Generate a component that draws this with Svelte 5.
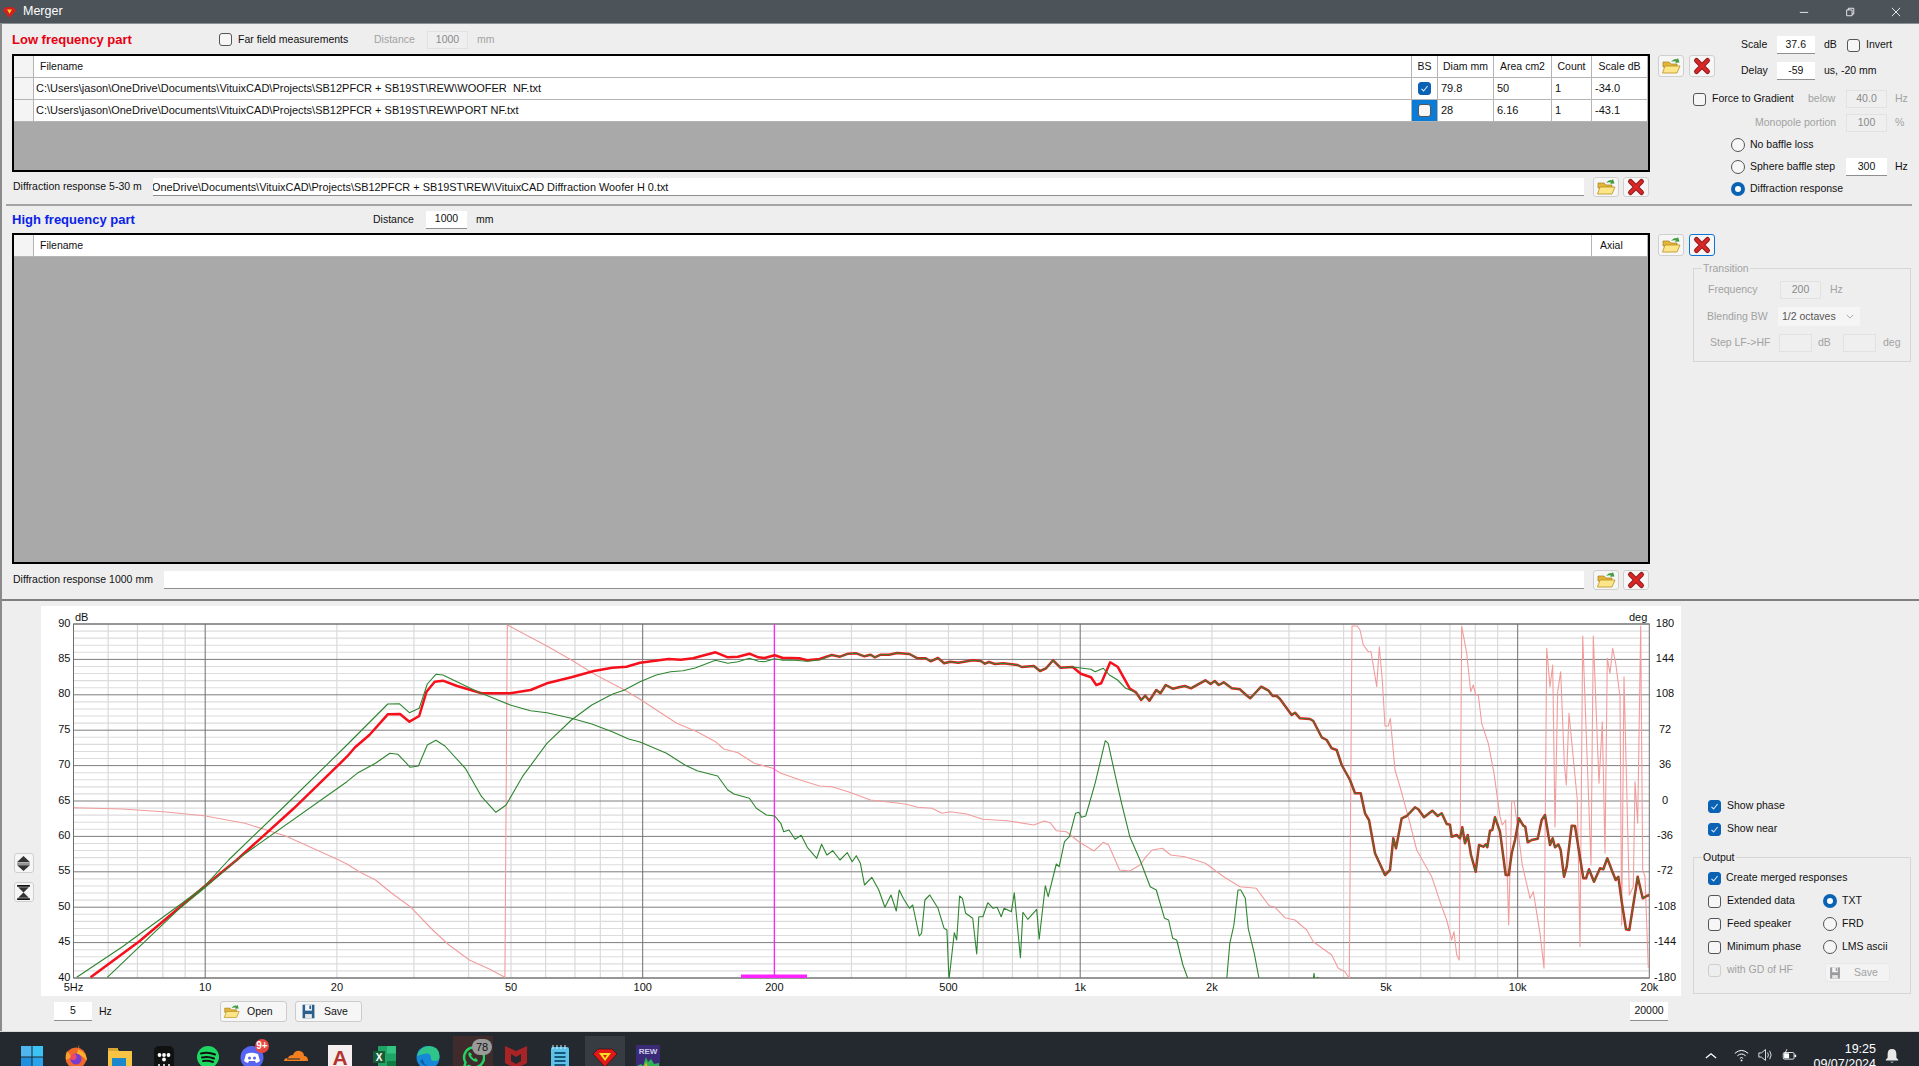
<script>
  const X = (f) => 73.5 + 437.5 * Math.log10(f / 5);
  const Y = (db) => 624 + (90 - db) * 7.08;
  const z4 = (a) => a.map(([x, y]) => [x / 2.45, 560 + y / 3]);
  const z5 = (a) => a.map(([x, y]) => [640 + x / 2.45, 600 + y / 3]);
  const z6 = (a) => a.map(([x, y]) => [1270 + x / 3, 600 + y / 3]);
  const z10 = (a) => a.map(([x, y]) => [x / 2.45, 860 + y / 3]);
  const pts = (a) => a.map(([x, y]) => x.toFixed(1) + ',' + y.toFixed(1)).join(' ');

  const redLow = [...z10([[222,352],[340,245],[500,80]]),
    ...z4([[580,900],[720,745],[825,620],[850,590],[870,562],[905,525],[950,463],[980,462],[1003,485],[1027,468],[1045,395],[1065,365],[1085,362],[1120,378],[1180,400],[1250,400],[1300,390],[1340,370],[1400,352],[1455,333],[1500,323],[1535,320],[1568,308]]),
    ...z5([[70,177],[100,179],[130,175],[185,157],[215,172],[240,170],[268,161],[290,172],[305,174],[330,166],[350,174],[370,174],[390,175],[410,181],[440,177]])];
  const shared1 = z5([[470,165],[490,170],[510,161],[530,160],[550,169],[565,164],[575,172],[590,164],[610,164],[630,159],[660,162],[680,175],[700,175],[712,184],[730,174],[745,190],[760,185],[780,188],[815,181],[835,183],[845,191],[855,186],[870,192],[890,190],[925,195],[935,201],[965,198],[980,213],[995,205],[1012,181],[1030,203],[1060,201]]);
  const redBump = z5([[1080,221],[1105,232],[1118,255],[1130,250],[1152,187],[1170,200],[1200,266]]);
  const greenBump = z5([[1085,205],[1105,208],[1115,215],[1135,205],[1150,225],[1170,240],[1190,265]]);
  const shared2 = [...z5([[1215,277],[1228,300],[1238,287],[1248,302],[1265,270],[1275,280],[1288,255],[1305,266],[1320,262],[1335,258],[1350,265],[1385,241],[1398,252],[1408,243],[1418,255],[1430,247],[1450,265],[1470,268],[1485,285],[1495,295],[1505,282],[1522,260],[1540,272],[1550,288],[1560,288]]),
    ...z6([[30,297],[65,345],[75,338],[90,355],[120,357],[130,363],[155,412],[170,420],[185,445],[200,450],[215,495],[240,540],[255,580],[272,580],[285,640],[297,660],[315,760],[345,825],[360,810],[370,715],[378,745],[395,655],[410,648],[435,622],[445,628],[462,652],[487,632],[503,648],[515,640],[530,672],[540,674],[545,710],[560,705],[570,715],[577,682],[585,730],[593,705],[603,765],[617,815],[627,735],[640,740],[648,733],[652,742],[660,692],[667,690],[675,652],[690,695],[707,825],[716,825],[725,760],[735,720],[747,655],[760,677],[766,680],[773,727],[785,720],[803,716],[815,660],[825,645],[840,735],[848,715],[855,742],[865,733],[872,750],[882,830],[890,800],[905,677],[915,678],[940,835],[948,835],[957,808],[972,845],[990,805],[1000,808],[1012,775],[1025,810],[1037,840],[1045,830],[1055,905],[1068,988],[1078,990],[1103,830],[1118,895],[1130,888],[1138,885]])];
  const red = [...redLow, ...shared1, ...redBump, ...shared2];

  const greenA = [...z10([[188,352],[300,260],[440,135],[500,80]]),
    ...z4([[560,900],[700,735],[850,555],[950,432],[978,431],[1003,458],[1027,445],[1047,372],[1068,343],[1085,345],[1170,395],[1250,435],[1300,452],[1340,458],[1400,475],[1450,492],[1500,515],[1540,537]]),
    ...z5([[0,426],[65,460],[110,495],[140,512],[190,528],[215,570],[230,582],[268,595],[285,625],[310,645],[330,648],[345,670],[352,695],[365,690],[380,718],[395,706],[410,742],[433,775],[445,733],[458,765],[472,752],[490,780],[508,758],[520,785],[530,767],[540,790],[550,855],[568,832],[585,870],[600,922],[615,885],[628,933],[635,870],[645,895],[660,925],[668,915],[684,1008],[690,1000],[698,900],[710,885],[730,925],[745,985],[752,990],[757,1140],[770,998],[776,1020],[783,888],[790,895],[798,940],[815,955],[825,1062],[830,950],[840,950],[852,908],[865,925],[875,922],[885,950],[892,925],[910,935],[917,878],[932,1073],[938,937],[950,958],[972,928],[978,1018],[993,857],[1000,890],[1020,792],[1027,800],[1040,725],[1052,710],[1067,640],[1075,637],[1082,652],[1092,648],[1115,550],[1140,422],[1147,430],[1165,530],[1180,610],[1200,710],[1225,780],[1250,860],[1265,870],[1285,955],[1295,960],[1305,1015],[1315,1020],[1330,1095],[1345,1145],[1437,1145],[1445,1030],[1455,975],[1465,870],[1472,870],[1483,895],[1490,985],[1505,1060],[1518,1145]])];
  const blip = z6([[130,1140],[132,1120],[135,1140],[143,1132],[148,1140]]);

  const greenB = [...z10([[263,352],[440,145],[500,85]]),
    ...z4([[590,890],[850,665],[875,640],[920,610],[955,580],[975,583],[1005,622],[1025,618],[1047,555],[1068,541],[1090,558],[1140,625],[1180,710],[1215,757],[1240,735],[1280,650],[1340,550],[1400,480],[1450,435],[1500,403],[1530,390]]),
    ...z5([[0,245],[40,225],[75,215],[105,212],[135,204],[185,181],[215,190],[240,185],[268,175],[290,184],[305,185],[330,176],[350,181],[370,180],[410,184],[440,180]]),
    ...shared1, ...greenBump, ...shared2];

  const pink = [...z4([[180,743],[300,747],[400,755],[500,767],[600,790],[700,828]]),
    ...z10([[830,0],[850,12],[880,35],[920,60],[960,100],[1005,140],[1060,210],[1100,255],[1150,300],[1200,328],[1237,352]]),
    ...z4([[1243,195],[1340,258],[1400,300],[1460,345],[1530,390]]),
    ...z5([[0,298],[90,370],[140,395],[185,425],[205,447],[240,458],[280,490],[325,505],[345,520],[400,543],[440,558],[470,560],[510,575],[565,600],[650,612],[680,622],[715,625],[740,640],[760,635],[800,642],[840,658],[900,662],[965,675],[990,663],[1005,668],[1020,692],[1045,695],[1075,725],[1112,753],[1135,727],[1148,735],[1175,810],[1200,813],[1225,795],[1240,770],[1255,750],[1280,745],[1300,765],[1335,770],[1385,790],[1430,830],[1470,860],[1510,865],[1540,915]]),
    ...z6([[0,918],[15,922],[45,953],[75,960],[110,990],[130,1025],[185,1065],[205,1105],[225,1115],[238,1135],[246,78],[262,78],[270,90],[280,135],[295,155],[303,155],[320,260],[328,140],[337,240],[345,378],[355,378],[361,355],[375,510],[390,560],[420,670],[440,750],[485,830],[515,920],[530,960],[545,1020],[552,995],[560,1065],[568,1080],[575,78],[590,160],[602,275],[610,255],[617,285],[625,285],[635,370],[655,430],[672,520],[690,650],[697,675],[707,660],[716,975],[725,605],[733,605],[757,795],[780,895],[790,875],[810,1000],[822,1105],[830,145],[840,260],[848,195],[855,680],[863,275],[872,215],[883,490],[889,555],[897,340],[922,600],[930,1040],[938,108],[963,795],[970,108],[987,550],[997,365],[1005,760],[1012,175],[1020,220],[1028,145],[1037,190],[1050,290],[1055,975],[1062,230],[1078,885],[1090,860],[1095,545],[1103,670],[1112,78],[1118,810],[1125,830],[1135,1105]])];

  const minorF = [];
  for (const d of [1, 10, 100, 1000, 10000]) {
    for (let m = 1; m <= 9; m++) {
      const f = d * m;
      if (f > 5 && f < 20000 && ![10, 100, 1000, 10000].includes(f)) minorF.push(f);
    }
  }
  const majorF = [10, 100, 1000, 10000];
  const minorDb = [];
  const majorDb = [];
  for (let db = 40; db <= 90; db++) (db % 5 === 0 ? majorDb : minorDb).push(db);
  const xticks = [[5,'5Hz'],[10,'10'],[20,'20'],[50,'50'],[100,'100'],[200,'200'],[500,'500'],[1000,'1k'],[2000,'2k'],[5000,'5k'],[10000,'10k'],[20000,'20k']];
  const degs = [180,144,108,72,36,0,-36,-72,-108,-144,-180];

  const rows = [
    { file: 'C:\\Users\\jason\\OneDrive\\Documents\\VituixCAD\\Projects\\SB12PFCR + SB19ST\\REW\\WOOFER  NF.txt', bs: true, d: '79.8', a: '50', c: '1', s: '-34.0' },
    { file: 'C:\\Users\\jason\\OneDrive\\Documents\\VituixCAD\\Projects\\SB12PFCR + SB19ST\\REW\\PORT NF.txt', bs: false, d: '28', a: '6.16', c: '1', s: '-43.1' }
  ];
</script>

{#snippet folder()}
  <svg class="ico" viewBox="0 0 20 20" aria-hidden="true">
    <path d="M2 6h6l2 2h6v3H2z" fill="#e2b53a" stroke="#a67f1c" stroke-width=".7"/>
    <path d="M1.5 17 4 10h15l-3 7z" fill="#fde58a" stroke="#b8901f" stroke-width=".8"/>
    <path d="M10 6q2.500-3.500 6-2.800l1-1.200 1.500 4.500-4.500.2 1-1.200q-2.500-.8-5 .5z" fill="#3f9d3f"/>
  </svg>
{/snippet}
{#snippet cross()}
  <svg class="ico" viewBox="0 0 20 20" aria-hidden="true">
    <path d="M4.500 4.500l11 11M15.500 4.500l-11 11" stroke="#8f1d1d" stroke-width="5" stroke-linecap="round"/>
    <path d="M4.500 4.500l11 11M15.500 4.500l-11 11" stroke="#dc2626" stroke-width="3" stroke-linecap="round"/>
  </svg>
{/snippet}
{#snippet floppy(c)}
  <svg class="ico" viewBox="0 0 20 20" aria-hidden="true">
    <path d="M3 2h14v16H3z" fill={c}/>
    <path d="M6 2h8v7H6z" fill="#f2f6fa"/>
    <path d="M6 13h8v5H6z" fill="#e6e6e6"/>
    <path d="M11 3h2v4h-2z" fill={c}/>
  </svg>
{/snippet}
{#snippet checkbox(on, off)}
  <span class="cb" class:on class:off>
    {#if on}
      <svg viewBox="0 0 13 13" aria-hidden="true"><path d="M3.500 6.800 5.600 9l4-5" fill="none" stroke="#dbe9f6" stroke-width="1.100"/></svg>
    {/if}
  </span>
{/snippet}

<div class="app">
  <header class="titlebar">
    <svg class="logo" viewBox="0 0 16 14" aria-hidden="true">
      <path d="M3 1h10l3 4-8 9-8-9z" fill="#d81e1e"/>
      <path d="M5 4h6l-3 5z" fill="#f5d020"/>
    </svg>
    <span class="wtitle">Merger</span>
    <div class="wctl">
      <span class="wbtn"><svg viewBox="0 0 12 12" aria-hidden="true"><path d="M1 6.500h10" stroke="#fff"/></svg></span>
      <span class="wbtn"><svg viewBox="0 0 12 12" aria-hidden="true"><path d="M2 3.500h6.500v7H2zM4 3.500V1.500h6.500v7H8.500" fill="none" stroke="#fff"/></svg></span>
      <span class="wbtn"><svg viewBox="0 0 12 12" aria-hidden="true"><path d="M1 1l10 10M11 1 1 11" stroke="#fff"/></svg></span>
    </div>
  </header>

  <main class="window">
    <section class="band lfband">
      <div class="leftcol">
        <div class="head lfhead">
          <h2 class="lf">Low frequency part</h2>
          <label class="ck farfield">{@render checkbox(false)}<span>Far field measurements</span></label>
          <span class="dim dist">Distance</span>
          <span class="inp dis w41">1000</span>
          <span class="dim unit">mm</span>
        </div>
        <div class="tbl lftbl">
          <table>
            <thead>
              <tr><th class="rh"></th><th class="fn">Filename</th><th class="c-bs">BS</th><th class="c-d">Diam mm</th><th class="c-a">Area cm2</th><th class="c-c">Count</th><th class="c-s">Scale dB</th></tr>
            </thead>
            <tbody>
              {#each rows as r}
                <tr>
                  <td class="rh"></td><td class="file">{r.file}</td>
                  <td class="bscell" class:sel={!r.bs}>{@render checkbox(r.bs)}</td>
                  <td>{r.d}</td><td>{r.a}</td><td>{r.c}</td><td>{r.s}</td>
                </tr>
              {/each}
            </tbody>
          </table>
        </div>
        <div class="diff lfdiff">
          <span class="dlabel lfl">Diffraction response 5-30 m</span>
          <span class="inp wide clipped"><span class="shift">OneDrive\Documents\VituixCAD\Projects\SB12PFCR + SB19ST\REW\VituixCAD Diffraction Woofer H 0.txt</span></span>
          <button class="ib small">{@render folder()}</button>
          <button class="ib small">{@render cross()}</button>
        </div>
      </div>
      <aside class="rightcol">
        <div class="scaleblock">
          <div class="btnpair">
            <button class="ib">{@render folder()}</button>
            <button class="ib">{@render cross()}</button>
          </div>
          <div class="scaleform">
            <div class="frow"><span class="w36">Scale</span><span class="inp w39">37.6</span><span class="du">dB</span>{@render checkbox(false)}<span class="invert">Invert</span></div>
            <div class="frow"><span class="w36">Delay</span><span class="inp w39">-59</span><span class="du">us, -20 mm</span></div>
          </div>
        </div>
        <div class="frow force">
          {@render checkbox(false)}<span class="ftxt">Force to Gradient</span><span class="dim blw">below</span><span class="inp dis w41">40.0</span><span class="dim hz">Hz</span>
        </div>
        <div class="frow mono">
          <span class="dim monol">Monopole portion</span><span class="inp dis w41">100</span><span class="dim hz">%</span>
        </div>
        <div class="frow radio r1"><span class="rd"></span><span>No baffle loss</span></div>
        <div class="frow radio r2"><span class="rd"></span><span class="sph">Sphere baffle step</span><span class="inp w41">300</span><span class="hz2">Hz</span></div>
        <div class="frow radio r2"><span class="rd on"></span><span>Diffraction response</span></div>
      </aside>
    </section>

    <div class="sep"></div>

    <section class="band hfband">
      <div class="leftcol">
        <div class="head hfhead">
          <h2 class="hf">High frequency part</h2>
          <span class="dist2">Distance</span>
          <span class="inp w41">1000</span>
          <span class="unit">mm</span>
        </div>
        <div class="tbl hftbl">
          <table>
            <thead><tr><th class="rh"></th><th class="fn">Filename</th><th class="c-ax">Axial</th></tr></thead>
          </table>
        </div>
        <div class="diff hfdiff">
          <span class="dlabel hfl">Diffraction response 1000 mm</span>
          <span class="inp wide"></span>
          <button class="ib small">{@render folder()}</button>
          <button class="ib small">{@render cross()}</button>
        </div>
      </div>
      <aside class="rightcol">
        <div class="btnpair hfbtns">
          <button class="ib">{@render folder()}</button>
          <button class="ib focus">{@render cross()}</button>
        </div>
        <fieldset class="group trans">
          <legend>Transition</legend>
          <div class="frow t1"><span class="dim tl1">Frequency</span><span class="inp dis w41">200</span><span class="dim thz">Hz</span></div>
          <div class="frow t2"><span class="dim tl2">Blending BW</span><span class="sel-box">1/2 octaves<svg viewBox="0 0 10 6" aria-hidden="true"><path d="M1 1l4 4 4-4" fill="none" stroke="#999"/></svg></span></div>
          <div class="frow t3"><span class="dim tl3">Step LF-&gt;HF</span><span class="inp dis w33"></span><span class="dim tdb">dB</span><span class="inp dis w33"></span><span class="dim tdeg">deg</span></div>
        </fieldset>
      </aside>
    </section>

    <section class="lower">
      <div class="strip">
        <button class="ib tool">
          <svg viewBox="0 0 16 16" aria-hidden="true"><path d="M8 1l6 5.500H2z" fill="#333"/><path d="M2 7h12v.9H2zM2 8.300h12v.9H2z" fill="#777"/><path d="M2 9.700h12L8 15z" fill="#333"/></svg>
        </button>
        <button class="ib tool">
          <svg viewBox="0 0 16 16" aria-hidden="true"><path d="M2 1h12v1.500H2zM2 13.500h12V15H2z" fill="#111"/><path d="M3 3h10L8 8zM8 8l5 5H3z" fill="#333"/></svg>
        </button>
      </div>

      <svg class="chart" viewBox="41 606 1640 390" aria-label="Frequency response chart">
        <defs><clipPath id="plot"><rect x="73.500" y="624" width="1575.800" height="354"/></clipPath></defs>
        <rect x="41" y="606" width="1640" height="390" fill="#fff"/>
        {#each minorDb as d}<line x1="73.500" x2="1649.300" y1={Y(d)} y2={Y(d)} stroke="#dcdcdc" stroke-width="1.100"/>{/each}
        {#each minorF as f}<line x1={X(f)} x2={X(f)} y1="624" y2="978" stroke="#dadada" stroke-width="1.200"/>{/each}
        {#each majorDb as d}<line x1="73.500" x2="1649.300" y1={Y(d)} y2={Y(d)} stroke="#7e7e7e" stroke-width="1"/>{/each}
        {#each majorF as f}<line x1={X(f)} x2={X(f)} y1="624" y2="978" stroke="#6e6e6e" stroke-width="1"/>{/each}
        <rect x="73.500" y="624" width="1575.800" height="354" fill="none" stroke="#6e6e6e"/>

        <g clip-path="url(#plot)" fill="none" stroke-linejoin="round">
          <polyline points={pts(pink)} stroke="#f29c9c" stroke-width="1.100"/>
          <line x1={X(200)} x2={X(200)} y1="624" y2="978" stroke="#ff22ff" stroke-width="1.300"/>
          <polyline points={pts(red)} stroke="#f5101c" stroke-width="2.500"/>
          <polyline points={pts(greenA)} stroke="#2e8530" stroke-width="1.100"/>
          <polyline points={pts(greenB)} stroke="#2e8530" stroke-width="1.100"/>
          <polyline points={pts(blip)} stroke="#2e8530" stroke-width="1.100"/>
          <rect x="741" y="974.500" width="66" height="4" fill="#ff22ff" stroke="none"/>
        </g>

        <g class="ct">
          {#each majorDb as d}<text x="70.500" y={Y(d) + 2.500} text-anchor="end">{d}</text>{/each}
          {#each xticks as [f, t]}<text x={X(f)} y="991" text-anchor="middle">{t}</text>{/each}
          {#each degs as d, i}<text x="1665" y={624 + i * 35.400 + 2.500} text-anchor="middle">{d}</text>{/each}
          <text x="75" y="621">dB</text>
          <text x="1629" y="621">deg</text>
        </g>
      </svg>

      <aside class="lowright">
        <label class="ck lr1">{@render checkbox(true)}<span>Show phase</span></label>
        <label class="ck lr2">{@render checkbox(true)}<span>Show near</span></label>
        <fieldset class="group out">
          <legend class="blk">Output</legend>
          <label class="ck o1">{@render checkbox(true)}<span class="tight">Create merged responses</span></label>
          <div class="ogrid">
            <label class="ck">{@render checkbox(false)}<span>Extended data</span></label>
            <label class="ck"><span class="rd on bl"></span><span class="rdl">TXT</span></label>
            <label class="ck">{@render checkbox(false)}<span>Feed speaker</span></label>
            <label class="ck"><span class="rd bl"></span><span class="rdl">FRD</span></label>
            <label class="ck">{@render checkbox(false)}<span>Minimum phase</span></label>
            <label class="ck"><span class="rd bl"></span><span class="rdl">LMS ascii</span></label>
            <label class="ck disabled">{@render checkbox(false, true)}<span class="dim">with GD of HF</span></label>
            <button class="txtbtn savedis">{@render floppy('#9a9a9a')}<span class="dim">Save</span></button>
          </div>
        </fieldset>
      </aside>

      <div class="botbar">
        <span class="inp w38 tall">5</span>
        <span class="bhz">Hz</span>
        <button class="txtbtn open">{@render folder()}<span>Open</span></button>
        <button class="txtbtn save">{@render floppy('#2b5f8e')}<span>Save</span></button>
        <span class="inp w38 tall end">20000</span>
      </div>
    </section>
  </main>

  <footer class="taskbar">
    <div class="tile"><svg viewBox="0 0 24 24" aria-hidden="true"><rect x="1" y="1" width="10.500" height="10.500" fill="#4fb6ef"/><rect x="12.500" y="1" width="10.500" height="10.500" fill="#3cc3f5"/><rect x="1" y="12.500" width="10.500" height="10.500" fill="#1d8fe0"/><rect x="12.500" y="12.500" width="10.500" height="10.500" fill="#2aa3ea"/></svg></div>
    <div class="tile"><svg viewBox="0 0 24 24" aria-hidden="true"><circle cx="12" cy="13" r="10.500" fill="#f0682b"/><path d="M15 0c1 3-2 4 0 5 4 1 8 5 8 11-3-4-6-6-10-7z" fill="#fcb12b"/><path d="M3 6q-2 4-1 9l6-3z" fill="#f9a22b"/><circle cx="12" cy="14" r="5.500" fill="#7a3bd0"/><circle cx="9.500" cy="12" r="3" fill="#ed4a6a"/></svg></div>
    <div class="tile"><svg viewBox="0 0 24 24" aria-hidden="true"><path d="M0 3h9l2 3h13v18H0z" fill="#f6c344"/><rect x="0" y="3" width="10" height="3" fill="#d9a534"/><rect x="4" y="13" width="14" height="11" fill="#1b87cc"/></svg></div>
    <div class="tile"><svg viewBox="0 0 24 24" aria-hidden="true"><rect x="2" y="1" width="20" height="24" rx="5" fill="#111"/><g fill="#fff"><circle cx="7.500" cy="10" r="1.900"/><circle cx="12" cy="10" r="1.900"/><circle cx="16.500" cy="10" r="1.900"/><circle cx="12" cy="14.500" r="1.900"/><circle cx="7" cy="20" r="1"/><circle cx="12" cy="20" r="1"/><circle cx="17" cy="20" r="1"/></g></svg></div>
    <div class="tile"><svg viewBox="0 0 24 24" aria-hidden="true"><circle cx="12" cy="12" r="11" fill="#1ed760"/><path d="M5 8.500q7-2 14 1M6 12.500q6-1.500 12 1M7 16q5-1 10 1" fill="none" stroke="#111" stroke-width="2" stroke-linecap="round"/></svg></div>
    <div class="tile"><svg viewBox="0 0 24 24" aria-hidden="true"><circle cx="12" cy="12.500" r="11.500" fill="#5865f2"/><path d="M6 9q6-2.500 12 0l2 7q-2 1.500-4 2l-1-2H9l-1 2q-2-.5-4-2z" fill="#fff"/><circle cx="9.500" cy="13" r="1.500" fill="#5865f2"/><circle cx="14.500" cy="13" r="1.500" fill="#5865f2"/></svg><span class="badge red">9+</span></div>
    <div class="tile"><svg viewBox="0 0 24 24" aria-hidden="true"><path d="M0 16q0-3 4-3 1-3 5-3 2-5 7-4 4 1 4 5 4 0 4 5z" fill="#f38020"/><path d="M3 14h13" stroke="#23292f" stroke-width="1"/></svg></div>
    <div class="tile"><svg viewBox="0 0 24 24" aria-hidden="true"><rect x="0" y="0" width="24" height="25" fill="#f4eeee"/><text x="12" y="19.500" text-anchor="middle" class="acad">A</text></svg></div>
    <div class="tile"><svg viewBox="0 0 24 24" aria-hidden="true"><rect x="6" y="1" width="18" height="23" rx="1" fill="#21a366"/><rect x="15" y="1" width="9" height="7.500" fill="#33c481"/><rect x="15" y="16" width="9" height="8" fill="#107c41"/><rect x="1" y="6" width="12" height="12" fill="#185c37"/><text x="7" y="16" text-anchor="middle" class="xl">X</text></svg></div>
    <div class="tile"><svg viewBox="0 0 24 24" aria-hidden="true"><circle cx="12" cy="12.500" r="11.500" fill="#1688d8"/><path d="M1 11Q4 1 13 1q10 0 10.500 10 .5 5-5 5-4 0-3.500-3 0-5-5-4.500Q4 9.500 1 11z" fill="#2fc489"/><path d="M7 14q0 5 5 7-5 0-8-5z" fill="#0c5ea8"/></svg></div>
    <div class="tile wa"><svg viewBox="0 0 24 24" aria-hidden="true"><path d="M3 23l1.500-5.500A10 10 0 1 1 8 21z" fill="none" stroke="#25d366" stroke-width="2.500"/><path d="M8 7q-2 3 2 7t7 2l-2-3-2 1-3-3 1-2z" fill="#25d366"/></svg><span class="badge gray">78</span></div>
    <div class="tile"><svg viewBox="0 0 24 24" aria-hidden="true"><path d="M1 1l11 5 11-5v17l-11 6-11-6z" fill="#a82426"/><path d="M7 9l5 3 5-3v7l-5 3-5-3z" fill="#23292f"/></svg></div>
    <div class="tile"><svg viewBox="0 0 24 24" aria-hidden="true"><rect x="3" y="2" width="18" height="23" rx="2" fill="#5cc2e8"/><path d="M6.500 8h11M6.500 12h11M6.500 16h11M6.500 20h11" stroke="#15577a" stroke-width="2"/><path d="M5 0v4M9 0v4M13 0v4M17 0v4" stroke="#d6eef8"/></svg></div>
    <div class="tile active"><svg viewBox="0 0 24 24" aria-hidden="true"><path d="M5 4h14l5 5-12 13L0 9z" fill="#e01818" stroke="#2a0a0a" stroke-width=".6"/><path d="M6 8h12l-6 8z" fill="#f5e020"/><path d="M10 10h4l-2 3z" fill="#e01818"/></svg></div>
    <div class="tile"><svg viewBox="0 0 24 24" aria-hidden="true"><rect x="0" y="0" width="24" height="25" fill="#3b2a78"/><text x="12" y="8.500" text-anchor="middle" class="rew">REW</text><path d="M1 25v-4l4-2 2 2 3-9 2 5 3-3 3 5 5-1v7z" fill="#2fb455"/><path d="M7 25l3-8 3 8z" fill="#f0b020"/></svg></div>

    <div class="tray">
      <svg class="t-up" viewBox="0 0 14 8" aria-hidden="true"><path d="M1 7l6-5 6 5" fill="none" stroke="#fff" stroke-width="1.500"/></svg>
      <svg class="t-ic" viewBox="0 0 18 16" aria-hidden="true"><path d="M1 6q8-7 16 0M4 9q5-4.500 10 0M7 12q2-2 4 0" fill="none" stroke="#fff" stroke-width="1.200"/><circle cx="9" cy="14.500" r="1.100" fill="#fff"/></svg>
      <svg class="t-ic" viewBox="0 0 18 16" aria-hidden="true"><path d="M1 5.500h3L9 1.500v13l-5-4H1z" fill="none" stroke="#fff"/><path d="M11.500 5q2 3 0 6M14 3q3.500 5 0 10" fill="none" stroke="#fff"/></svg>
      <svg class="t-ic" viewBox="0 0 18 16" aria-hidden="true"><rect x="1.500" y="5" width="13" height="8" rx="1.500" fill="none" stroke="#fff"/><rect x="2.500" y="6" width="6" height="6" fill="#fff"/><path d="M15 7.500h2v3h-2z" fill="#fff"/><path d="M6 1 3 7h3l-1 3" fill="none" stroke="#fff"/></svg>
      <div class="clock"><span>19:25</span><span>09/07/2024</span></div>
      <svg class="t-bell" viewBox="0 0 16 18" aria-hidden="true"><path d="M8 1q-5 0-5 6v4l-2 2v1h14v-1l-2-2V7q0-6-5-6z" fill="#e8e8e8"/><path d="M6 15.500h4q-2 2-4 0z" fill="#e8e8e8"/></svg>
    </div>
  </footer>
</div>

<style>
  :global(body) { margin: 0; background: #eee; overflow: hidden; }
  .app {
    width: 1919px; height: 1066px; display: flex; flex-direction: column; overflow: hidden;
    font: 10.500px/1.1 "Liberation Sans", Arial, sans-serif; color: #111; background: #eee;
  }
  .titlebar {
    height: 23px; border-bottom: 1px solid #8a8f93; background: #4c545a; color: #fff;
    display: flex; align-items: center; flex: none;
  }
  .logo { width: 13px; height: 12px; margin-left: 3px; }
  .wtitle { margin-left: 7px; font-size: 12.500px; }
  .wctl { margin-left: auto; display: flex; }
  .wbtn { width: 46px; display: flex; justify-content: center; }
  .wbtn svg { width: 10px; height: 10px; }

  .window { border-left: 2px solid #8b8b8b; flex: 1; display: flex; flex-direction: column; min-height: 0; }
  .band { display: flex; flex: none; }
  .lfband { height: 180px; }
  .hfband { height: 393px; }
  .sep { height: 2px; background: #a4a4a4; margin: 0 7px 0 4px; flex: none; }

  .leftcol { width: 1648px; padding-left: 10px; box-sizing: border-box; flex: none; }
  .rightcol { flex: 1; min-width: 0; }

  .head { display: flex; align-items: center; }
  .lfhead { height: 30px; padding-top: 1px; box-sizing: border-box; }
  .hfhead { height: 27px; }
  h2 { margin: 0; font-size: 13px; font-weight: bold; padding-top: 1px; }
  .lf { color: #e60012; width: 207px; }
  .hf { color: #0a22e8; width: 361px; }
  .ck { display: flex; align-items: center; gap: 6px; height: 18px; }
  .farfield { width: 155px; }
  .dist { width: 53px; }
  .dist2 { width: 53px; }
  .unit { margin-left: 9px; }
  .dim { color: #a2a2a2; }

  .inp {
    background: #fff; border-bottom: 1px solid #8e8e8e; height: 18px; box-sizing: border-box;
    display: flex; align-items: center; justify-content: center; flex: none; white-space: nowrap;
  }
  .inp.dis { background: #efefef; border: 1px solid #e2e2e2; color: #8a8a8a; }
  .w41 { width: 41px; }
  .w39 { width: 38.500px; }
  .w38 { width: 38px; }
  .w33 { width: 33px; }
  .tall { height: 19px; }

  .tbl { width: 1638px; border: 2px solid #000; box-sizing: border-box; background: #a9a9a9; overflow: hidden; }
  .lftbl { height: 118px; }
  .hftbl { height: 331px; }
  table { width: 100%; border-collapse: collapse; table-layout: fixed; background: #fff; }
  th, td { border: 1px solid #b4b4b4; font-weight: normal; padding: 1px 3px 0; height: 21px; box-sizing: border-box; text-align: left; white-space: pre; overflow: hidden; }
  tr > :first-child { border-left: 0; }
  thead th { border-top: 0; height: 21px; text-align: center; }
  th.fn { text-align: left; padding-left: 6px; }
  td { height: 22px; font-size: 11px; }
  .rh { width: 19.500px; padding: 0; background: #f4f4f4; }
  .file { padding-left: 2px; }
  .c-bs { width: 26px; }
  .c-d { width: 56px; }
  .c-a { width: 58px; }
  .c-c { width: 40px; }
  .c-s { width: 56px; }
  th.c-ax { width: 56px; text-align: left; padding-left: 8px; }
  .bscell { padding: 0; text-align: center; }
  .bscell .cb { margin: 0 auto; }
  .bscell.sel { background: #0a7bd6; }

  .diff { display: flex; align-items: center; height: 20px; padding-right: 1px; }
  .lfdiff { margin-top: 5px; }
  .hfdiff { margin-top: 6px; }
  .dlabel { padding-left: 1px; flex: none; }
  .lfl { width: 140px; }
  .hfl { width: 151px; }
  .wide { flex: 1; justify-content: flex-start; height: 18px; margin-right: 9px; font-size: 10.900px; padding-top: 1px; }
  .clipped { overflow: hidden; }
  .shift { margin-left: -1px; }

  .ib {
    width: 26px; height: 22px; padding: 0; border: 1px solid #cfcfcf; border-radius: 3px; background: #f6f6f6;
    display: flex; align-items: center; justify-content: center; flex: none;
  }
  .ib.small { height: 20px; }
  .ib.small + .ib.small { margin-left: 4px; }
  .ib.focus { border: 1.500px solid #0a74d4; }
  .ico { width: 20px; height: 20px; flex: none; }

  .scaleblock { display: flex; height: 44px; padding: 12px 0 0 8px; }
  .btnpair { display: flex; gap: 5px; }
  .scaleblock .btnpair { margin-top: 19px; }
  .scaleform { margin-left: 26px; display: flex; flex-direction: column; gap: 8px; }
  .frow { display: flex; align-items: center; height: 18px; flex: none; }
  .w36 { width: 35.500px; }
  .du { margin-left: 9px; width: 23px; white-space: nowrap; }
  .invert { margin-left: 6px; }

  .force { margin-top: 10px; padding-left: 43px; }
  .ftxt { margin-left: 6px; width: 96px; }
  .blw { width: 38px; }
  .hz { margin-left: 8px; }
  .hz2 { margin-left: 3px; }
  .mono { margin-top: 6px; padding-left: 105px; }
  .monol { width: 91px; }
  .radio { padding-left: 81px; gap: 5px; }
  .r1 { margin-top: 4px; }
  .r2 { margin-top: 4px; }
  .sph { width: 91px; }

  .cb {
    width: 13px; height: 13px; box-sizing: border-box; border: 1px solid #555; border-radius: 3px;
    background: #f6f6f6; display: block; flex: none;
  }
  .cb svg { display: block; width: 13px; height: 13px; margin: -1px; }
  .cb.on { background: #0a62b4; border-color: #0a62b4; }
  .cb.off { border-color: #cfcfcf; background: #eeeeee; }
  .rd {
    width: 14px; height: 14px; box-sizing: border-box; border: 1px solid #555; border-radius: 50%;
    background: #f6f6f6; flex: none; display: block;
  }
  .rd.on { border: 4px solid #0a62b4; background: #fff; }
  .rdl { margin-left: -1px; }

  .hfbtns { margin: 28px 0 0 8px; }
  .group { border: 1px solid #d6d6d6; padding: 0; margin: 0 0 0 43px; width: 218px; box-sizing: border-box; min-inline-size: 0; }
  legend { margin-left: 8px; padding: 0 1px; line-height: 12px; color: #a2a2a2; }
  legend.blk { color: #111; }
  .trans { height: 100px; margin-top: 6px; }
  .t1 { margin-top: 7px; padding-left: 14px; }
  .tl1 { width: 72px; }
  .thz { margin-left: 9px; }
  .t2 { margin-top: 8px; padding-left: 13px; height: 19px; }
  .tl2 { width: 71px; }
  .sel-box {
    width: 82px; height: 19px; box-sizing: border-box; background: #f5f5f5; color: #555;
    display: flex; align-items: center; justify-content: space-between; padding: 0 6px 0 4px; white-space: nowrap;
  }
  .sel-box svg { width: 8px; height: 5px; }
  .t3 { margin-top: 8px; padding-left: 16px; }
  .tl3 { width: 69px; }
  .tdb { margin-left: 6px; width: 25px; }
  .tdeg { margin-left: 7px; }

  .lower {
    border-top: 2px solid #7f7f7f; padding-top: 5px; flex: 1; min-height: 0;
    display: grid; grid-template-columns: 39px 1640px 238px; grid-template-rows: 390px 35px;
  }
  .strip { padding: 247px 0 0 11.500px; display: flex; flex-direction: column; gap: 9px; }
  .ib.tool { width: 20px; height: 20px; }
  .ib.tool svg { width: 17px; height: 17px; }
  .chart { width: 1640px; height: 390px; display: block; }
  .ct text { font: 11px "Liberation Sans", Arial, sans-serif; fill: #111; }

  .lowright { grid-row: 1 / 3; grid-column: 3; padding-top: 191px; }
  .lr1 { margin-left: 27px; }
  .lr2 { margin: 5px 0 0 27px; }
  .out { height: 143px; margin: 13px 0 0 12px; }
  .o1 { margin: 6px 0 0 14px; gap: 5px; }
  .ogrid { display: grid; grid-template-columns: 115px 1fr; row-gap: 5px; margin: 5px 0 0 14px; }
  .tight { white-space: nowrap; }
  .savedis { width: 65px; height: 19px; border: 1px solid #e8e8e8; background: #f3f3f3; margin: 2px 0 0 2px; }
  .txtbtn {
    display: flex; align-items: center; border-radius: 3px; padding: 0; box-sizing: border-box;
    font: inherit; color: inherit;
  }
  .savedis .ico { width: 14px; height: 14px; margin-left: 2px; }
  .savedis span { margin-left: 12px; }

  .botbar { grid-column: 1 / 3; grid-row: 2; display: flex; align-items: flex-start; padding: 6px 13px 0 52px; }
  .bhz { margin-left: 7px; width: 121px; line-height: 19px; }
  .txtbtn.open, .txtbtn.save { width: 67px; height: 21px; border: 1px solid #ccc; background: #f6f6f6; margin-top: -1px; }
  .save { margin-left: 8px; }
  .open .ico, .save .ico { width: 17px; height: 17px; margin-left: 2px; }
  .open span { margin-left: 7px; }
  .save .ico { margin-left: 4px; }
  .save span { margin-left: 7px; }
  .end { margin-left: auto; }

  .taskbar {
    height: 35px; flex: none; background: #23292f; border-top: 1px solid #d8d8d8; box-sizing: border-box;
    display: flex; padding-left: 10px; color: #fff; overflow: hidden;
  }
  .tile { width: 44px; flex: none; padding-top: 13px; box-sizing: border-box; position: relative; display: flex; justify-content: center; }
  .tile svg { width: 24px; height: 24px; flex: none; }
  .tile.wa { background: #3f2b2b padding-box; margin-top: 4px; padding-top: 9px; border-left: 3px solid transparent; border-right: 1px solid transparent; }
  .tile.active { background: #363c42 padding-box; margin-top: 4px; padding-top: 9px; border-left: 3px solid transparent; border-right: 1px solid transparent; }
  .badge {
    position: absolute; font-size: 10px; color: #fff; display: flex;
    align-items: center; justify-content: center; line-height: 1;
  }
  .badge.red { background: #e8473f; width: 14px; height: 14px; border-radius: 50%; top: 7px; left: 25px; font-weight: bold; }
  .badge.gray { background: #9a9a9a; width: 20px; height: 16px; border-radius: 8px; top: 3px; left: 19px; color: #111; font-size: 11px; }
  .acad { font: bold 21px "Liberation Sans", sans-serif; fill: #b5332e; }
  .xl { font: bold 10px "Liberation Sans", sans-serif; fill: #fff; }
  .rew { font: bold 8px "Liberation Sans", sans-serif; fill: #cfd0e8; }
  .tray { margin-left: auto; display: flex; align-items: flex-start; padding-top: 16px; position: relative; height: 50px; }
  .t-up { width: 12px; height: 7px; margin-top: 4px; margin-right: 17px; }
  .t-ic { width: 15px; height: 14px; margin-right: 9px; }
  .clock { display: flex; flex-direction: column; align-items: flex-end; font-size: 12.500px; line-height: 15px; margin: -6px 9px 0 7px; }
  .t-bell { width: 14px; height: 16px; margin-right: 20px; }
</style>
